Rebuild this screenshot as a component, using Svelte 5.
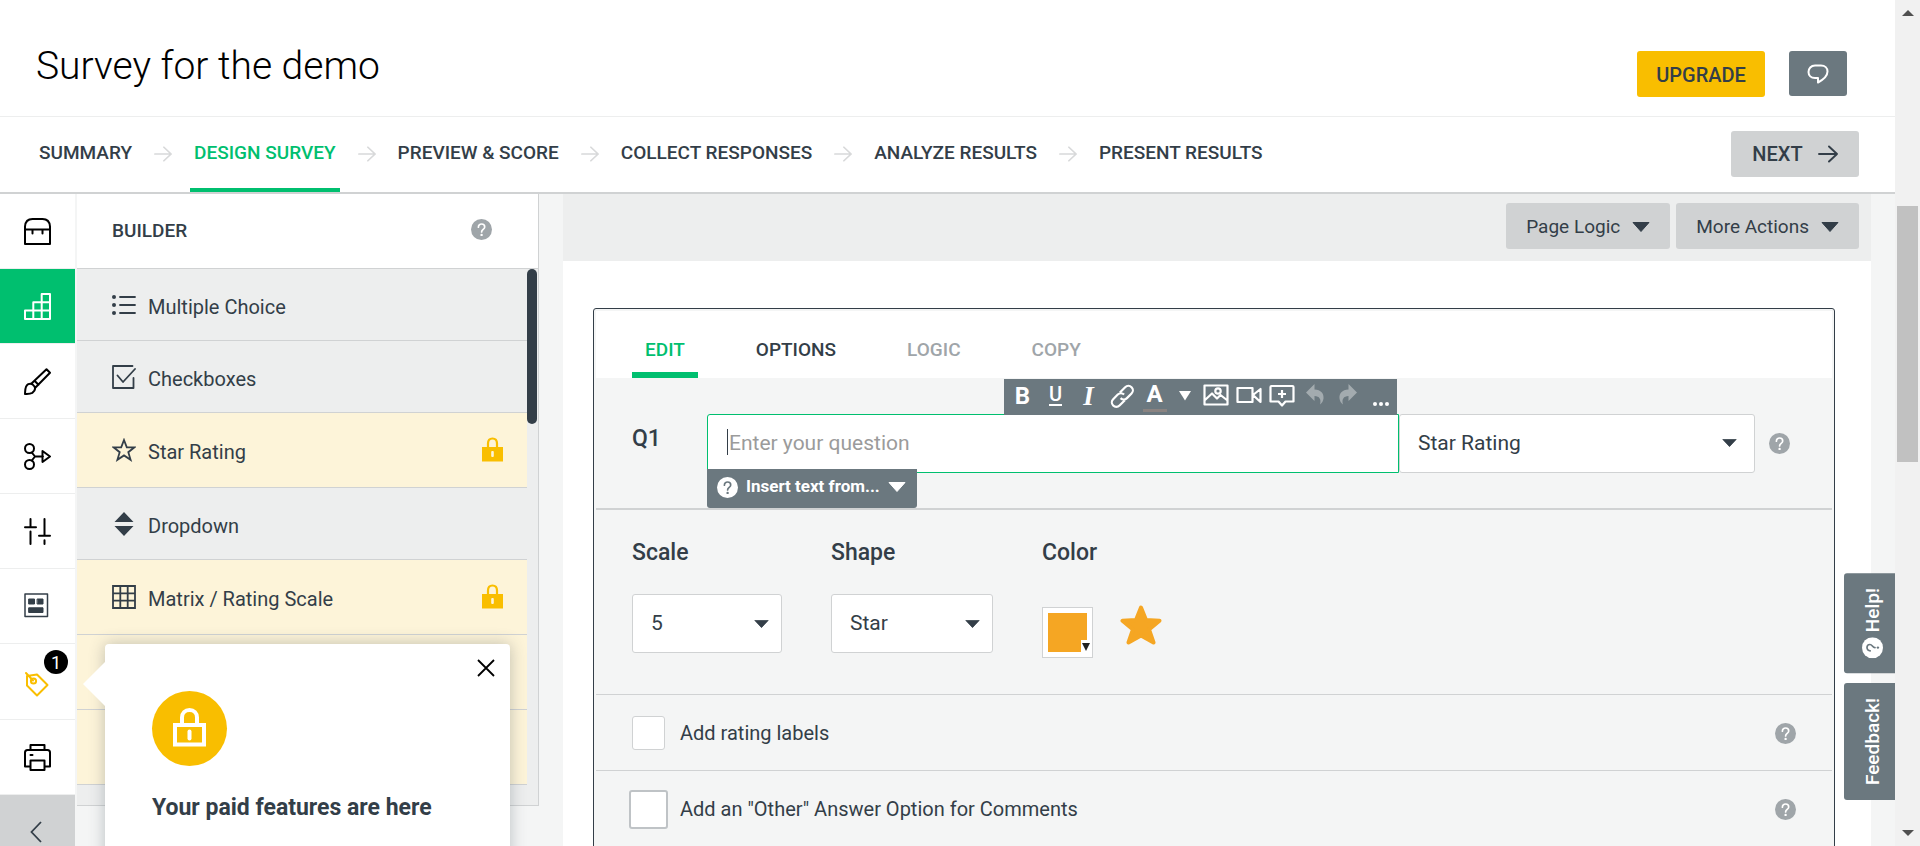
<script>
  const steps = [
    { label: 'SUMMARY' },
    { label: 'DESIGN SURVEY', active: true },
    { label: 'PREVIEW & SCORE' },
    { label: 'COLLECT RESPONSES' },
    { label: 'ANALYZE RESULTS' },
    { label: 'PRESENT RESULTS' }
  ];

  const rail = [
    { id: 'bank', label: 'Question bank' },
    { id: 'blocks', label: 'Builder', active: true },
    { id: 'style', label: 'Style' },
    { id: 'logic', label: 'Logic' },
    { id: 'options', label: 'Options' },
    { id: 'format', label: 'Format' },
    { id: 'tag', label: 'Paid features', count: 1 },
    { id: 'print', label: 'Print' }
  ];

  const types = [
    { id: 'list', label: 'Multiple Choice' },
    { id: 'check', label: 'Checkboxes' },
    { id: 'star', label: 'Star Rating', paid: true },
    { id: 'dropdown', label: 'Dropdown' },
    { id: 'matrix', label: 'Matrix / Rating Scale', paid: true },
    { id: '', label: '', paid: true },
    { id: '', label: '', paid: true }
  ];

  const tabs = [
    { label: 'EDIT', state: 'active' },
    { label: 'OPTIONS', state: '' },
    { label: 'LOGIC', state: 'muted' },
    { label: 'COPY', state: 'muted' }
  ];

  const tools = ['bold', 'underline', 'italic', 'link', 'color', 'caret', 'image', 'video', 'comment', 'undo', 'redo', 'more'];
</script>

{#snippet help()}
  <svg class="help" viewBox="0 0 21 21" width="21" height="21" aria-hidden="true">
    <circle cx="10.5" cy="10.5" r="10.5" fill="var(--disc, #9fa5a9)" />
    <path d="M7.4 8.2c0-1.9 1.3-3.2 3.2-3.2s3.1 1.2 3.1 2.9c0 2.500-3.100 2.500-3.100 5.100" fill="none" stroke="var(--mark, #fff)" stroke-width="1.7" stroke-linecap="round" />
    <circle cx="10.6" cy="15.9" r="1.2" fill="var(--mark, #fff)" />
  </svg>
{/snippet}

{#snippet arrow(size)}
  <svg viewBox="0 0 20 18" width={size} height="18" fill="none" stroke="currentColor" stroke-width="1.9" stroke-linecap="round" stroke-linejoin="round" aria-hidden="true">
    <path d="M1 9h18M11 1.500l8 7.500-8 7.500" />
  </svg>
{/snippet}

{#snippet triangle(w, h)}
  <svg class="tri" viewBox="0 0 18 10" width={w} height={h} preserveAspectRatio="none" aria-hidden="true">
    <path d="M1 .5h16L9 9.500z" fill="currentColor" stroke="currentColor" stroke-linejoin="round" />
  </svg>
{/snippet}

{#snippet railIcon(id)}
  <svg viewBox="0 0 27 27" width="27" height="27" fill="none" stroke="currentColor" stroke-width="2" stroke-linejoin="round" stroke-linecap="round" aria-hidden="true">
    {#if id === 'bank'}
      <path d="M1 8.500Q1.500 1 8.500 1h10Q25.500 1 26 8.500V26H1zM1 11.500h25M8.500 12v3.500M18.500 12v3.500" />
    {:else if id === 'blocks'}
      <path d="M1 17.500h25M9.300 9.300H26M17.700 1H26v25H1v-8.500M9.300 9.300V26M17.700 1v25" />
    {:else if id === 'style'}
      <path d="M1 26c.3-4-.2-8 3.200-9.800 2.500-1.200 5 .3 6.300 2.300 1.200 2.400 0 4.800-2.200 6.300C6 26 3.500 25.800 1 26zM7.500 15.500L22.500 1.200 26 4.800 11.500 19.500M10.500 12.800l4 4" />
    {:else if id === 'logic'}
      <circle cx="5.500" cy="5.500" r="4.500" />
      <circle cx="5.500" cy="21.500" r="4.500" />
      <path d="M7.800 9.500l3.200 4-3.200 4M11 13.500h8M18.500 8l7.500 5.500-7.500 5.500z" />
    {:else if id === 'options'}
      <path d="M6.500 1v8M1 9.200h11M6.500 13.500V26M20.500 1v16M15 17.800h11M20.500 22.200V26" />
    {:else if id === 'format'}
      <g stroke="#333e48" stroke-width="1.500"><path d="M1 1h22.500v22.500H1z" /></g>
      <g fill="#333e48" stroke="#333e48" stroke-width="1"><path d="M5 6h5.500v5H5zM13.500 6H19v5h-5.500zM5 14.800h14v4.700H5z" /></g>
    {:else if id === 'tag'}
      <path d="M3 6L13 4.500l10.500 10.500L13 25.500 3 15.500zM2 3l7 7.500" />
      <circle cx="9.500" cy="11" r="2.600" />
    {:else if id === 'print'}
      <path d="M6.500 6V1h14v5M6.500 22.500H1V8.500Q1 6 3.500 6h20Q26 6 26 8.500v14h-5.500M6.500 16.500h14V26h-14zM6.500 11h2" />
    {/if}
  </svg>
{/snippet}

{#snippet typeIcon(id)}
  <svg viewBox="0 0 24 24" width="24" height="24" fill="none" stroke="#333e48" stroke-width="1.800" aria-hidden="true">
    {#if id === 'list'}
      <path d="M8 4h15M8 12h15M8 20h15" stroke-linecap="round" />
      <g fill="#333e48" stroke="none"><circle cx="2" cy="4" r="2" /><circle cx="2" cy="12" r="2" /><circle cx="2" cy="20" r="2" /></g>
    {:else if id === 'check'}
      <path d="M20.500 1H1v22h20.500V13M5.500 10.500l5.500 6.500 12-13" stroke-linecap="round" stroke-linejoin="round" />
    {:else if id === 'star'}
      <path d="M12 2l2.800 7.300h7.700l-6.200 4.900 2.300 7.600L12 17.400l-6.600 4.400 2.300-7.600L1.500 9.300h7.700z" />
    {:else if id === 'dropdown'}
      <path d="M12 0l9.500 10h-19zM12 24l9.500-10h-19z" fill="#333e48" stroke="none" />
    {:else if id === 'matrix'}
      <path d="M1 1h22v22H1zM8.300 1v22M15.700 1v22M1 8.300h22M1 15.700h22" />
    {/if}
  </svg>
{/snippet}

{#snippet toolIcon(id)}
  {#if id === 'bold'}
    <b class="glyph">B</b>
  {:else if id === 'underline'}
    <span class="glyph under">U</span>
  {:else if id === 'italic'}
    <i class="glyph ital">I</i>
  {:else if id === 'color'}
    <b class="glyph tint">A</b>
  {:else if id === 'more'}
    <svg viewBox="0 0 18 26" width="18" height="26" fill="#fff"><circle cx="3" cy="21" r="2" /><circle cx="9" cy="21" r="2" /><circle cx="15" cy="21" r="2" /></svg>
  {:else if id === 'caret'}
    <svg viewBox="0 0 12 10" width="12" height="10" fill="#fff"><path d="M0 0h12L6 9.500z" /></svg>
  {:else}
    <svg viewBox="0 0 26 26" width="26" height="26" fill="none" stroke="#fff" stroke-width="2.200" stroke-linejoin="round">
      {#if id === 'link'}
        <g transform="rotate(-45 13 13)">
          <path d="M12 18H4.500a4.500 4.500 0 0 1 0-9H11a4.500 4.500 0 0 1 4.500 4.500M14 9h7.500a4.500 4.500 0 0 1 0 9H15a4.500 4.500 0 0 1-4.500-4.500" />
        </g>
      {:else if id === 'image'}
        <path d="M1.500 2.500h23v19h-23zM2 17l7-6.500 5 5 3.500-3.500 7 5.500" />
        <circle cx="15" cy="8" r="2.700" />
      {:else if id === 'video'}
        <path d="M1.500 5h15v14h-15zM17 12l7.500-6v13z" />
      {:else if id === 'comment'}
        <path d="M2.500 3h21Q24.500 3 24.500 4v14.500h-8L13 22.500l-3.500-4h-8V4Q1.500 3 2.500 3zM13 7v8M9 11h8" />
      {:else if id === 'undo'}
        <path d="M4 9.500L12.500 1v5.500c6.500.3 9.500 4 9 9-.3 2.500-1.500 4.500-3.500 6 1.500-5-.5-8.500-5.500-8.500v5z" fill="#a3abaf" stroke="none" />
      {:else if id === 'redo'}
        <path d="M22 9.500L13.500 1v5.500c-6.500.3-9.500 4-9 9 .3 2.500 1.500 4.500 3.500 6-1.500-5 .5-8.500 5.500-8.500v5z" fill="#a3abaf" stroke="none" />
      {/if}
    </svg>
  {/if}
{/snippet}

<div class="window">
  <div class="page">
    <header>
      <h1>Survey for the demo</h1>
      <div class="actions">
        <a class="upgrade" href="#upgrade">UPGRADE</a>
        <button class="chat" aria-label="Comments">
          <svg viewBox="0 0 22 20" width="22" height="20" fill="none" stroke="#fff" stroke-width="2" stroke-linejoin="round">
            <path d="M8 1.500h6c4 0 6.500 2.500 6.500 6 0 5-4 8-9.500 11v-4.500H8C4 14 1.500 11.500 1.500 8S4 1.500 8 1.500z" />
          </svg>
        </button>
      </div>
    </header>

    <nav>
      <div class="steps">
        {#each steps as step, i}
          {#if i}<span class="sep">{@render arrow(18)}</span>{/if}
          <a href="#step" class:active={step.active}>{step.label}</a>
        {/each}
      </div>
      <button class="next">NEXT {@render arrow(20)}</button>
    </nav>

    <div class="body">
      <aside class="rail">
        {#each rail as item}
          <button class="rail-item" class:active={item.active} class:promo={item.count} aria-label={item.label}>
            {@render railIcon(item.id)}
            {#if item.count}<span class="badge">{item.count}</span>{/if}
          </button>
        {/each}
        <button class="collapse" aria-label="Collapse">
          <svg viewBox="0 0 12 22" width="12" height="22" fill="none" stroke="#333e48" stroke-width="1.800"><path d="M11 1L1.500 11 11 21" /></svg>
        </button>
      </aside>

      <section class="builder">
        <div class="builder-head">
          <h2>BUILDER</h2>
          {@render help()}
        </div>
        <div class="builder-body">
          <ul>
            {#each types as type}
              <li class:paid={type.paid}>
                {#if type.label}
                  {@render typeIcon(type.id)}
                  <span>{type.label}</span>
                  {#if type.paid}
                    <svg class="lock" viewBox="0 0 21 25" width="21" height="25" aria-hidden="true">
                      <path d="M6 11V6.500C6 3.500 7.800 1.500 10.500 1.500S15 3.500 15 6.500V11" fill="none" stroke="#f9be00" stroke-width="2.200" />
                      <path d="M0 10h21v14.500H0z" fill="#f9be00" />
                      <rect x="9.200" y="14" width="2.600" height="6" rx="1" fill="#fdf4d9" />
                    </svg>
                  {/if}
                {/if}
              </li>
            {/each}
          </ul>
          <div class="thumb"></div>
        </div>
        <div class="popover" role="dialog" aria-labelledby="paid-title">
          <button class="close" aria-label="Close">
            <svg viewBox="0 0 18 18" width="18" height="18" stroke="#000" stroke-width="1.800"><path d="M1 1l16 16M17 1L1 17" /></svg>
          </button>
          <div class="disc">
            <svg viewBox="0 0 33 39" width="33" height="39" fill="none" stroke="#fff" stroke-width="4">
              <path d="M2 17h29v19.500H2zM9 17V9.500C9 5 12 2 16.500 2S24 5 24 9.500V17" />
              <path d="M16.500 23.500v7" stroke-linecap="round" />
            </svg>
          </div>
          <h3 id="paid-title">Your paid features are here</h3>
        </div>
      </section>

      <main>
        <div class="page-bar">
          <button>Page Logic {@render triangle(18, 10)}</button>
          <button>More Actions {@render triangle(18, 10)}</button>
        </div>

        <article class="card">
          <div class="tabs">
            {#each tabs as tab}
              <button class={tab.state}>{tab.label}</button>
            {/each}
          </div>

          <div class="question">
            <label class="number" for="question">Q1</label>
            <div class="entry">
              <input id="question" type="text" placeholder="Enter your question" />
              <span class="cursor"></span>
              <div class="toolbar">
                {#each tools as tool}
                  <button class:narrow={tool === 'caret'} aria-label={tool}>{@render toolIcon(tool)}</button>
                {/each}
              </div>
              <button class="insert">{@render help()} <span>Insert text from...</span> {@render triangle(18, 10)}</button>
            </div>
            <div class="pick kind">
              <select aria-label="Question type"><option>Star Rating</option></select>
              {@render triangle(15, 8)}
            </div>
            {@render help()}
          </div>

          <div class="settings">
            <div class="field">
              <label for="scale">Scale</label>
              <div class="pick scale">
                <select id="scale"><option>5</option></select>
                {@render triangle(15, 8)}
              </div>
            </div>
            <div class="field">
              <label for="shape">Shape</label>
              <div class="pick shape">
                <select id="shape"><option>Star</option></select>
                {@render triangle(15, 8)}
              </div>
            </div>
            <div class="field">
              <label for="color">Color</label>
              <div class="color">
                <button id="color" class="swatch" aria-label="Color"><span></span></button>
                <svg viewBox="0 0 42 40" width="42" height="40" aria-hidden="true">
                  <path d="M21 2.500l5 12.500 13.500.7L29 24.500l4.500 13L21 30.500l-12.500 7 4.500-13L2.500 15.700 16 15z" fill="#f5a623" stroke="#f5a623" stroke-width="4" stroke-linejoin="round" />
                </svg>
              </div>
            </div>
          </div>

          <div class="option">
            <label><input type="checkbox" /> Add rating labels</label>
            {@render help()}
          </div>
          <div class="option">
            <label><input class="hover" type="checkbox" /> Add an "Other" Answer Option for Comments</label>
            {@render help()}
          </div>
        </article>
      </main>
    </div>

    <div class="side">
      <button class="help-tab">{@render help()} Help!</button>
      <button>Feedback!</button>
    </div>
  </div>

  <div class="scrollbar">
    <svg viewBox="0 0 12 6" width="12" height="6"><path d="M0 6l6-6 6 6z" fill="#505050" /></svg>
    <div class="track"><div class="bar"></div></div>
    <svg viewBox="0 0 12 6" width="12" height="6"><path d="M0 0l6 6 6-6z" fill="#505050" /></svg>
  </div>
</div>

<style>
  :global(body) {
    margin: 0;
  }

  .window,
  .window * {
    box-sizing: border-box;
  }

  .window {
    display: flex;
    height: 100vh;
    overflow: hidden;
    color: #333e48;
    background: #fff;
    font-family: Roboto, "Liberation Sans", sans-serif;
    font-size: 19px;
    line-height: 24px;
  }

  .page {
    position: relative;
    flex: 1;
    min-width: 0;
    display: flex;
    flex-direction: column;
  }

  button,
  input,
  select {
    margin: 0;
    padding: 0;
    border: 0;
    background: none;
    color: inherit;
    font: inherit;
    appearance: none;
  }

  a {
    color: inherit;
    text-decoration: none;
  }

  h1,
  h2,
  h3,
  ul {
    margin: 0;
    padding: 0;
    list-style: none;
  }

  svg {
    display: block;
    flex: none;
  }

  header {
    flex: none;
    display: flex;
    align-items: flex-start;
    justify-content: space-between;
    height: 117px;
    padding: 51px 48px 0 36px;
    border-bottom: 1px solid #edeeee;
  }

  h1 {
    padding-top: 1px;
    font-size: 39px;
    line-height: 28px;
    font-weight: 300;
    color: #000;
  }

  .actions {
    display: flex;
    gap: 24px;
  }

  .upgrade,
  .chat,
  .next,
  .page-bar button {
    display: flex;
    align-items: center;
    justify-content: center;
    height: 46px;
    border-radius: 3px;
  }

  .upgrade {
    width: 128px;
    padding-top: 2px;
    background: #f9be00;
    font-size: 20px;
    font-weight: 500;
  }

  .chat {
    width: 58px;
    height: 45px;
    background: #6b787f;
  }

  nav {
    flex: none;
    display: flex;
    justify-content: space-between;
    height: 77px;
    padding: 0 36px 0 35px;
    border-bottom: 2px solid #d0d2d3;
    font-weight: 500;
  }

  .steps {
    display: flex;
    gap: 18px;
  }

  .steps a {
    padding: 24px 4px 0;
    white-space: nowrap;
  }

  .steps .active {
    color: #00bf6f;
    border-bottom: 4px solid #00bf6f;
  }

  .sep {
    padding-top: 28px;
    color: #d8d9da;
  }

  .next {
    gap: 15px;
    width: 128px;
    margin-top: 14px;
    background: #d0d2d3;
    font-size: 20px;
  }

  .body {
    flex: 1;
    min-height: 0;
    display: flex;
    align-items: flex-start;
    background: #f4f5f5;
  }

  .rail {
    flex: none;
    width: 77px;
    background: #fff;
    border-right: 2px solid #f4f5f5;
  }

  .rail-item {
    position: relative;
    display: flex;
    align-items: center;
    justify-content: center;
    width: 75px;
    height: 75px;
    border-bottom: 1px solid #edeeee;
    color: #000;
  }

  .rail-item.active {
    background: #00bf6f;
    color: #fff;
  }

  .rail-item.promo {
    height: 76px;
    padding-top: 3px;
    color: #f9be00;
  }

  .badge {
    position: absolute;
    top: 6px;
    right: 7px;
    width: 24px;
    height: 24px;
    border-radius: 12px;
    background: #000;
    color: #fff;
    font-size: 18px;
    line-height: 25px;
    text-align: center;
  }

  .collapse {
    display: flex;
    align-items: center;
    justify-content: center;
    width: 75px;
    height: 75px;
    padding: 0 4px 2px 0;
    background: #d0d2d3;
  }

  .builder {
    position: relative;
    flex: none;
    width: 462px;
    border-right: 1px solid #d0d2d3;
    border-bottom: 1px solid #d0d2d3;
    background: #edeeee;
  }

  .builder-head {
    display: flex;
    align-items: center;
    justify-content: space-between;
    height: 75px;
    padding: 0 46px 4px 35px;
    border-bottom: 1px solid #d0d2d3;
    background: #fff;
  }

  h2 {
    padding-top: 4px;
    font-size: 19px;
    line-height: 24px;
    font-weight: 500;
  }

  .builder-body {
    display: flex;
    align-items: flex-start;
    padding-bottom: 20px;
  }

  ul {
    flex: 1;
  }

  li {
    display: flex;
    align-items: center;
    gap: 12px;
    height: 72px;
    padding: 0 24px 0 35px;
    border-bottom: 1px solid #d0d2d3;
    font-size: 20px;
  }

  li span {
    flex: 1;
    padding-top: 4px;
  }

  li.paid {
    height: 75px;
    padding-bottom: 1px;
    background: #fdf4d9;
  }

  .thumb {
    width: 10px;
    height: 155px;
    margin-right: 1px;
    border-radius: 5px;
    background: #333e48;
  }

  .popover {
    position: absolute;
    z-index: 2;
    top: 450px;
    left: 28px;
    width: 405px;
    height: 360px;
    padding: 47px;
    border-radius: 4px;
    background: #fff;
    box-shadow: 0 0 16px rgba(51, 62, 72, 0.3);
  }

  .popover::before {
    content: "";
    position: absolute;
    top: 17px;
    left: -22px;
    border: 23px solid transparent;
    border-left: 0;
    border-right-color: #fff;
  }

  .close {
    position: absolute;
    top: 15px;
    right: 15px;
  }

  .disc {
    display: flex;
    align-items: center;
    justify-content: center;
    width: 75px;
    height: 75px;
    padding-bottom: 2px;
    border-radius: 50%;
    background: #f9be00;
  }

  h3 {
    margin-top: 28px;
    font-size: 23px;
    line-height: 28px;
    font-weight: 700;
  }

  main {
    flex: 1;
    min-width: 0;
    margin: 0 24px;
    background: #fff;
  }

  .page-bar {
    display: flex;
    justify-content: flex-end;
    gap: 6px;
    height: 67px;
    padding: 9px 12px 0;
    background: #edeeee;
  }

  .page-bar button {
    gap: 12px;
    padding: 1px 20px 0;
    background: #d0d2d3;
  }

  .card {
    margin: 47px 36px 0 30px;
    padding: 2px;
    border: 1px solid #333e48;
    border-radius: 3px;
    background: #f4f5f5;
  }

  .tabs {
    display: flex;
    gap: 45px;
    height: 67px;
    padding: 0 36px;
    background: #fff;
    font-weight: 500;
  }

  .tabs button {
    padding: 16px 13px 0;
    border-bottom: 6px solid transparent;
  }

  .tabs .active {
    color: #00bf6f;
    border-color: #00bf6f;
  }

  .tabs .muted {
    color: #9fa5a9;
  }

  .question {
    display: flex;
    align-items: center;
    height: 132px;
    padding: 0 42px 0 36px;
    border-bottom: 2px solid #d0d2d3;
  }

  .number {
    width: 75px;
    padding-bottom: 8px;
    font-size: 23px;
    font-weight: 500;
  }

  .entry {
    position: relative;
    flex: 1;
    height: 59px;
    font-size: 21px;
  }

  .entry input {
    width: 100%;
    height: 59px;
    padding: 0 21px;
    border: 1px solid #00bf6f;
    border-radius: 3px 0 0 3px;
    background: #fff;
  }

  .entry input::placeholder {
    color: #9b9b9b;
    opacity: 1;
  }

  .cursor {
    position: absolute;
    top: 15px;
    left: 20px;
    width: 1px;
    height: 26px;
    background: #333e48;
  }

  .toolbar {
    position: absolute;
    right: 2px;
    bottom: 58px;
    display: flex;
    width: 393px;
    height: 36px;
    padding-left: 2px;
    background: #6b787f;
    color: #fff;
  }

  .toolbar button {
    flex: none;
    display: flex;
    align-items: center;
    justify-content: center;
    width: 33px;
    height: 34px;
  }

  .toolbar .narrow {
    width: 28px;
  }

  .glyph {
    font-size: 24px;
    line-height: 24px;
    font-weight: 700;
  }

  .under {
    height: 21px;
    border-bottom: 2px solid #fff;
    font-size: 20px;
    line-height: 18px;
    font-weight: 500;
  }

  .ital {
    font-family: "Liberation Serif", serif;
    font-size: 27px;
  }

  .tint {
    width: 24px;
    height: 28px;
    margin-top: 4px;
    border-bottom: 3px solid #8a8381;
    line-height: 20px;
  }

  .insert {
    --disc: #fff;
    --mark: #6b787f;
    position: absolute;
    top: 55px;
    left: 0;
    display: flex;
    align-items: center;
    gap: 8px;
    height: 39px;
    padding: 0 11px 2px 10px;
    border-radius: 0 0 3px 3px;
    background: #6b787f;
    color: #fff;
    font-size: 17px;
    font-weight: 700;
    white-space: nowrap;
  }

  .insert span {
    padding-bottom: 2px;
  }

  .pick {
    display: grid;
    align-items: center;
    height: 59px;
    font-size: 21px;
  }

  .pick > :global(*) {
    grid-area: 1 / 1;
  }

  .pick select {
    width: 100%;
    height: 59px;
    padding: 0 18px;
    border: 1px solid #d0d2d3;
    border-radius: 3px;
    background: #fff;
  }

  .field select {
    padding-bottom: 2px;
  }

  .pick :global(.tri) {
    justify-self: end;
    margin-right: 13px;
    pointer-events: none;
  }

  .kind {
    width: 356px;
    margin-right: 14px;
  }

  .kind :global(.tri) {
    margin-right: 18px;
  }

  .scale {
    width: 150px;
  }

  .shape {
    width: 162px;
  }

  .settings {
    display: flex;
    gap: 49px;
    height: 185px;
    padding: 31px 36px 0;
    border-bottom: 1px solid #d0d2d3;
  }

  .field > label {
    display: block;
    height: 53px;
    font-size: 23px;
    font-weight: 500;
  }

  .color {
    display: flex;
    gap: 27px;
    padding-top: 11px;
  }

  .swatch {
    position: relative;
    width: 51px;
    height: 51px;
    margin-top: 2px;
    padding: 5px;
    border: 1px solid #d0d2d3;
    background: #fff;
  }

  .swatch span {
    display: block;
    height: 39px;
    background: #f5a623;
  }

  .swatch::before {
    content: "";
    position: absolute;
    right: 0;
    bottom: 0;
    width: 11px;
    height: 17px;
    background: #fff;
  }

  .swatch::after {
    content: "";
    position: absolute;
    right: 2px;
    bottom: 6px;
    border: 4px solid transparent;
    border-top: 8px solid #222;
    border-bottom: 0;
  }

  .option {
    display: flex;
    align-items: center;
    justify-content: space-between;
    height: 76px;
    padding: 1px 36px 0;
    border-bottom: 1px solid #d0d2d3;
    font-size: 20px;
  }

  .option label {
    display: flex;
    align-items: center;
    gap: 15px;
  }

  .option input {
    width: 33px;
    height: 34px;
    border: 1px solid #d0d2d3;
    border-radius: 3px;
    background: #fff;
  }

  .option input.hover {
    width: 39px;
    height: 39px;
    margin: 0 -3px;
    border: 2px solid #bfc3c6;
  }

  .side {
    position: absolute;
    z-index: 3;
    top: 573px;
    right: 0;
    display: flex;
    flex-direction: column;
    align-items: flex-end;
    gap: 10px;
  }

  .side button {
    --disc: #fff;
    --mark: #6b787f;
    display: flex;
    align-items: center;
    gap: 5px;
    width: 51px;
    padding: 15px 17px 15px 10px;
    border-radius: 0 3px 3px 0;
    background: #6b787f;
    color: #fff;
    font-weight: 500;
    writing-mode: vertical-rl;
    transform: rotate(180deg);
  }

  .side :global(.help) {
    transform: rotate(90deg);
  }

  .scrollbar {
    flex: none;
    display: flex;
    flex-direction: column;
    align-items: center;
    width: 25px;
    padding: 10px 0;
    background: #f1f1f1;
  }

  .track {
    flex: 1;
    padding-top: 190px;
  }

  .bar {
    width: 21px;
    height: 256px;
    background: #c1c1c1;
  }
</style>
